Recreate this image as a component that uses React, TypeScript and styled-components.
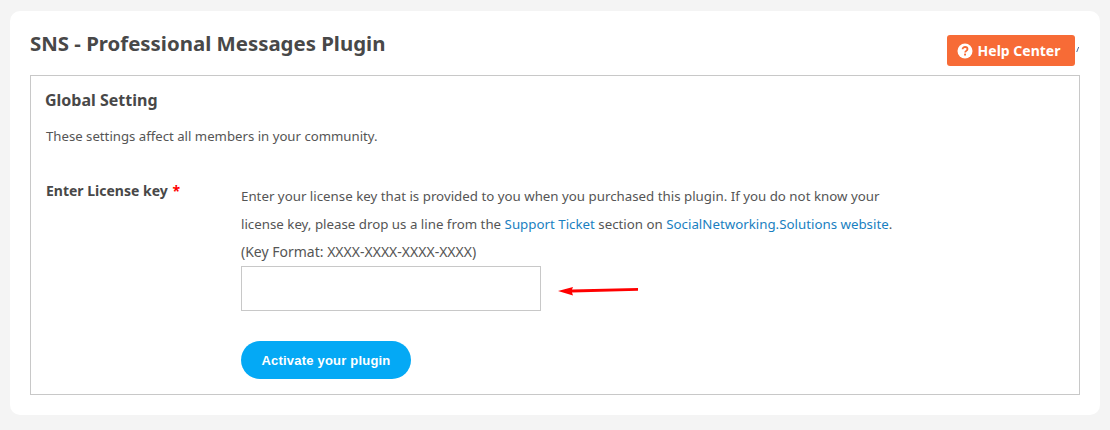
import React from 'react'
import styled, { createGlobalStyle } from 'styled-components'

const GlobalStyle = createGlobalStyle`
  html, body {
    margin: 0;
    padding: 0;
    background: #f4f4f4;
  }
  body {
    font-family: "Noto Sans", "Open Sans", sans-serif;
    color: #555;
  }
`

const Page = styled.div`
  width: 1110px;
  height: 430px;
  box-sizing: border-box;
  padding: 11px 10px 15px;
`

const Card = styled.div`
  height: 404px;
  box-sizing: border-box;
  background: #fff;
  border-radius: 10px;
  padding: 20px 20px 20px;
`

const Header = styled.div`
  display: flex;
  justify-content: space-between;
  height: 44px;
`

const Title = styled.h1`
  margin: 0;
  font-size: 20.4px;
  line-height: 24px;
  font-weight: 700;
  color: #484848;
`

const HelpWrap = styled.div`
  display: flex;
  align-items: flex-start;
  gap: 1px;
  padding: 4px 0 0;
`

const HelpButton = styled.a`
  display: flex;
  align-items: center;
  justify-content: center;
  gap: 5px;
  width: 128px;
  height: 31px;
  box-sizing: border-box;
  padding-right: 5px;
  background: #f76b36;
  border-radius: 3px;
  color: #fff;
  font-size: 14px;
  font-weight: 700;
`

const Tick = styled.span`
  width: 4px;
  height: 5px;
  margin-top: 12px;
  svg { display: block; }
`

const Box = styled.section`
  height: 320px;
  box-sizing: border-box;
  border: 1px solid #c8c8c8;
  padding: 14px 14px 0;
`

const BoxTitle = styled.h2`
  margin: 0;
  font-size: 16px;
  line-height: 20px;
  font-weight: 700;
  color: #484848;
`

const Description = styled.p`
  margin: 16px 0 0 1px;
  font-size: 13.2px;
  line-height: 20px;
  color: #555;
`

const FormRow = styled.div`
  display: grid;
  grid-template-columns: 195px 1fr;
  margin: 35px 0 0 1px;
`

const Label = styled.label`
  font-size: 14px;
  line-height: 20px;
  font-weight: 700;
  color: #484848;
`

const Required = styled.span`
  margin-left: 1px;
  color: #f00;
`

const Field = styled.div`
  padding-top: 1px;
`

const Help = styled.p`
  margin: 0;
  white-space: nowrap;
  font-size: 13.3px;
  line-height: 28px;
  color: #555;
`

const Link = styled.a`
  color: #1a7fc1;
  text-decoration: none;
`

const KeyFormat = styled.div`
  font-size: 14px;
  line-height: 20px;
  margin-top: 4px;
  color: #555;
`

const InputRow = styled.div`
  display: flex;
  align-items: center;
  gap: 17px;
  margin-top: 4px;
`

const KeyInput = styled.input`
  width: 300px;
  height: 45px;
  box-sizing: border-box;
  border: 1px solid #c8c8c8;
  background: #fff;
  outline: none;
`

const Arrow = styled.svg`
  display: block;
  margin-top: 4px;
`

const Activate = styled.button`
  display: block;
  width: 170px;
  height: 38px;
  margin-top: 30px;
  border: 0;
  border-radius: 19px;
  background: #04a9f5;
  color: #fff;
  font-family: "Liberation Sans", Arial, sans-serif;
  font-size: 13px;
  letter-spacing: 0.2px;
  font-weight: 700;
`

export default function App() {
    return (
        <Page>
            <GlobalStyle />
            <Card>
                <Header>
                    <Title>SNS - Professional Messages Plugin</Title>
                    <HelpWrap>
                        <HelpButton>
                            <svg width="16" height="16" viewBox="0 0 16 16">
                                <circle cx="8" cy="8" r="7.5" fill="#fff" />
                                <path d="M5.6 6.2c0-1.4 1.1-2.2 2.5-2.2s2.4.8 2.4 2c0 1.9-2.3 1.8-2.3 3.4" fill="none" stroke="#f76b36" strokeWidth="1.8" />
                                <rect x="7.1" y="10.6" width="1.9" height="1.9" fill="#f76b36" />
                            </svg>
                            Help Center
                        </HelpButton>
                        <Tick>
                            <svg width="4" height="5" viewBox="0 0 4 5">
                                <path d="M2.7 0 L.7 5" stroke="#4a6a9a" strokeWidth="1" />
                            </svg>
                        </Tick>
                    </HelpWrap>
                </Header>
                <Box>
                    <BoxTitle>Global Setting</BoxTitle>
                    <Description>These settings affect all members in your community.</Description>
                    <FormRow>
                        <Label>Enter License key <Required>*</Required></Label>
                        <Field>
                            <Help>
                                Enter your license key that is provided to you when you purchased this plugin. If you do not know your<br />
                                license key, please drop us a line from the <Link>Support Ticket</Link> section on <Link>SocialNetworking.Solutions website</Link>.
                            </Help>
                            <KeyFormat>(Key Format: XXXX-XXXX-XXXX-XXXX)</KeyFormat>
                            <InputRow>
                                <KeyInput type="text" />
                                <Arrow width="80" height="11" viewBox="0 0 80 11">
                                    <path d="M0 6 L15 2 L14 4.6 L80 3 L80 5.7 L14 7.5 L15 10.5 Z" fill="#f00" />
                                </Arrow>
                            </InputRow>
                            <Activate>Activate your plugin</Activate>
                        </Field>
                    </FormRow>
                </Box>
            </Card>
        </Page>
    )
}
